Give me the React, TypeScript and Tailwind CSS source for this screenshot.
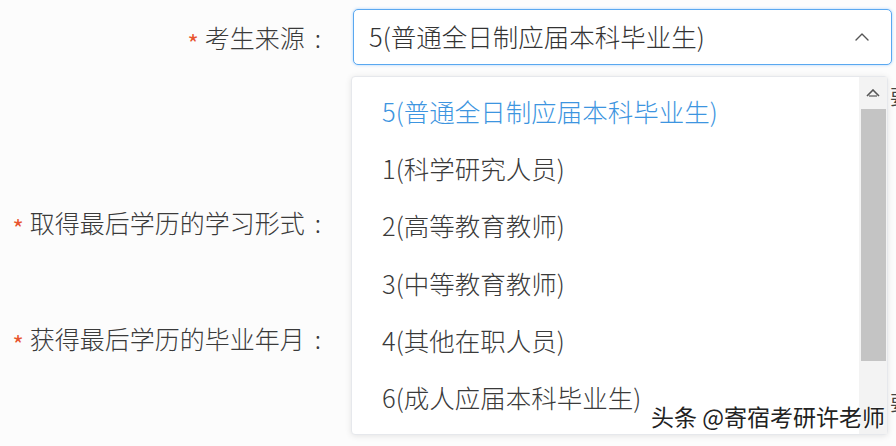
import { ChevronUp } from 'lucide-react'

const options = [
  '5(普通全日制应届本科毕业生)',
  '1(科学研究人员)',
  '2(高等教育教师)',
  '3(中等教育教师)',
  '4(其他在职人员)',
  '6(成人应届本科毕业生)',
]

const font = { fontFamily: '"Noto Sans CJK SC", "Noto Sans", sans-serif' }

const Label = ({ text }: { text: string }) => (
  <div className="w-[340px] shrink-0 pr-[19px] flex items-center justify-end text-[25px] font-light text-[#3a3a3a] leading-none">
    <span className="text-[#e8542e] text-[24px] font-normal mr-[6px] relative top-[6px]">*</span>
    <span>{text}</span>
    <span className="ml-[10px]">:</span>
  </div>
)

export default function App() {
  return (
    <div
      className="relative w-[896px] h-[446px] overflow-hidden bg-[#fcfcfc] pt-[9px]"
      style={font}
    >
      {/* Row 1 */}
      <div className="flex items-center h-[56px]">
        <Label text="考生来源" />
        <div className="ml-[13px] w-[539px] h-[56px] flex items-center justify-between pl-[15px] pr-[17px] border border-[#5aa8f0] rounded-[5px] shadow-[0_0_3px_rgba(64,158,255,0.45)] bg-white">
          <span className="text-[25.5px] font-light text-[#333] leading-none relative top-[-1px]">{options[0]}</span>
          <ChevronUp className="w-[24px] h-[24px] text-[#555]" strokeWidth={1.4} />
        </div>
      </div>

      {/* Row 2 */}
      <div className="flex items-center h-[56px] mt-[129px]">
        <Label text="取得最后学历的学习形式" />
      </div>

      {/* Row 3 */}
      <div className="flex items-center h-[56px] mt-[60px]">
        <Label text="获得最后学历的毕业年月" />
      </div>

      {/* Dropdown */}
      <div className="absolute left-[351px] top-[76px] w-[537px] h-[359px] bg-white border border-[#e6e8ec] rounded-[4px] shadow-[0_1px_6px_rgba(0,0,0,0.10)] flex">
        <ul className="flex-1 pt-[5px]">
          {options.map((o, i) => (
            <li
              key={o}
              className={`h-[57.3px] flex items-center pl-[30px] text-[25.5px] font-light leading-none ${
                i === 0 ? 'text-[#3d95e0]' : 'text-[#3a3a3a]'
              }`}
            >
              {o}
            </li>
          ))}
        </ul>
        <div className="w-[28px] bg-[#f3f3f3] flex flex-col items-center">
          <svg width="14" height="8" viewBox="0 0 14 8" className="mt-[12px]">
            <path d="M1 7 L7 1 L13 7" fill="none" stroke="#555" strokeWidth="1.6" />
            <path d="M3 7 L11 7" stroke="#555" strokeWidth="1.2" />
          </svg>
          <div className="mt-[12px] w-[25px] h-[252px] bg-[#c4c4c4]" />
        </div>
      </div>

      {/* partial text at right edge */}
      <span className="absolute left-[890px] top-[82px] text-[20px] text-[#444]">要</span>
      <span className="absolute left-[890px] top-[388px] text-[20px] text-[#444]">要</span>

      {/* Watermark */}
      <div
        className="absolute left-[651px] top-[405px] text-[23px] text-[#222] leading-none"
        style={{ textShadow: '0 0 2px #fff, 0 0 2px #fff, 1px 1px 1px #fff' }}
      >
        头条 @寄宿考研许老师
      </div>
    </div>
  )
}
